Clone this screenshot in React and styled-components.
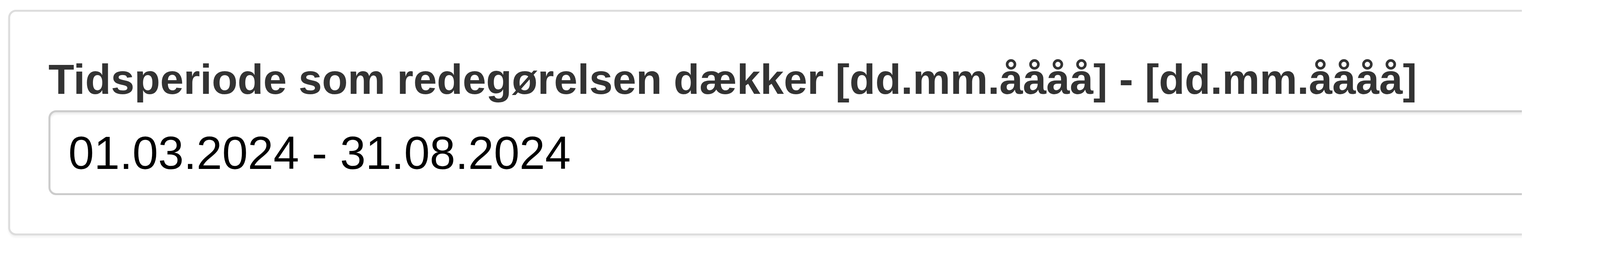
import React from "react"
import styled, { createGlobalStyle } from "styled-components"

const GlobalStyle = createGlobalStyle`
    html, body {
        margin: 0;
        padding: 0;
        background: #fff;
    }
    body {
        font-family: "Liberation Sans", Arial, sans-serif;
    }
`

// the screenshot is cut off on the right, so the panel sits in a clipping frame
const Viewport = styled.div`
    width: 3896px;
    height: 670px;
    overflow: hidden;
    padding: 25px 0 0 21px;
    box-sizing: border-box;
`

const Panel = styled.section`
    width: 4600px;
    box-sizing: border-box;
    padding: 96px 0 98px 98px;
    background: #fff;
    border: 5px solid #ddd;
    border-radius: 20px;
    box-shadow: 0 5px 5px rgba(0, 0, 0, 0.05);
`

const FieldLabel = styled.label`
    display: block;
    margin-bottom: 2px;
    font-size: 108px;
    font-weight: 700;
    line-height: 1.42857;
    color: #333;
    white-space: nowrap;
`

const DateInput = styled.input`
    display: block;
    width: 100%;
    height: 217px;
    box-sizing: border-box;
    padding: 0 46px;
    font-family: "Liberation Sans", Arial, sans-serif;
    font-size: 118px;
    color: #000;
    background: #fff;
    border: 5px solid #ccc;
    border-radius: 20px;
    box-shadow: inset 0 5px 5px rgba(0, 0, 0, 0.075);
    outline: 0;
`

function App() {
    return (
        <>
            <GlobalStyle />
            <Viewport>
                <Panel>
                    <FieldLabel htmlFor="periode">
                        Tidsperiode som redegørelsen dækker [dd.mm.åååå] - [dd.mm.åååå]
                    </FieldLabel>
                    <DateInput id="periode" type="text" defaultValue="01.03.2024 - 31.08.2024" readOnly />
                </Panel>
            </Viewport>
        </>
    )
}

export default App
